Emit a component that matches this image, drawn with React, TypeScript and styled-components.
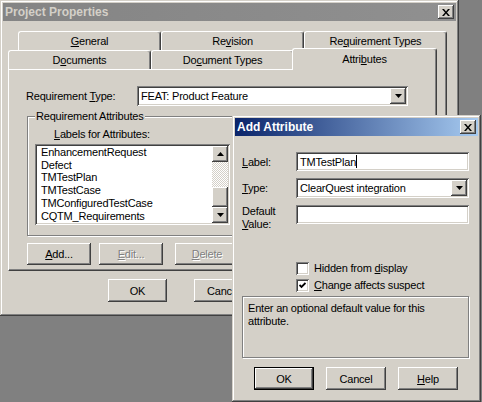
import styled, { createGlobalStyle } from "styled-components";

const GlobalStyle = createGlobalStyle`
  html, body {
    margin: 0;
    padding: 0;
  }
  body {
    background: #808080;
    font-family: "Liberation Sans", Arial, sans-serif;
    font-size: 11px;
    letter-spacing: -0.2px;
    color: #000;
  }
`;

const raised = `
  box-shadow: inset -1px -1px #404040, inset 1px 1px #ffffff,
    inset -2px -2px #808080, inset 2px 2px #d4d0c8;
`;

const sunken = `
  box-shadow: inset 1px 1px #808080, inset -1px -1px #ffffff,
    inset 2px 2px #404040, inset -2px -2px #d4d0c8;
`;

const Desktop = styled.div`
  position: relative;
  width: 482px;
  height: 402px;
  overflow: hidden;
  background: #808080;
`;

const Window = styled.div<{ $x: number; $y: number; $w: number; $h: number }>`
  position: absolute;
  left: ${(p) => p.$x}px;
  top: ${(p) => p.$y}px;
  width: ${(p) => p.$w}px;
  height: ${(p) => p.$h}px;
  box-sizing: border-box;
  padding: 3px;
  display: flex;
  flex-direction: column;
  background: #d4d0c8;
  box-shadow: inset -1px -1px #404040, inset 1px 1px #d4d0c8,
    inset -2px -2px #808080, inset 2px 2px #ffffff;
`;

const TitleBar = styled.div<{ $active?: boolean }>`
  flex: none;
  height: 18px;
  display: flex;
  align-items: center;
  justify-content: space-between;
  padding: 0 2px;
  background: ${(p) =>
    p.$active
      ? "linear-gradient(to right, #0a246a, #a6caf0)"
      : "linear-gradient(to right, #848484, #909090)"};
  color: ${(p) => (p.$active ? "#ffffff" : "#d4d0c8")};
  font-size: 12px;
  font-weight: bold;
  letter-spacing: 0;
`;

const CloseButton = styled.div`
  width: 16px;
  height: 14px;
  box-sizing: border-box;
  display: flex;
  align-items: center;
  justify-content: center;
  background: #d4d0c8;
  ${raised}
`;

const ProjectBody = styled.div`
  display: flex;
  flex-direction: column;
  padding: 10px 0 0 5px;
`;

const TabControl = styled.div`
  display: flex;
  flex-direction: column;
  width: 439px;
`;

const BackRow = styled.div`
  display: flex;
  height: 19px;
  padding-left: 10px;
`;

const FrontArea = styled.div`
  display: flex;
`;

const FrontColumn = styled.div`
  display: flex;
  flex-direction: column;
  width: 429px;
`;

const FrontRow = styled.div`
  display: flex;
  align-items: flex-end;
  height: 19px;
`;

const RowEdge = styled.div`
  width: 10px;
  box-sizing: border-box;
  border-right: 1px solid #404040;
  box-shadow: inset -1px 0 #808080;
`;

const Tab = styled.div<{ $selected?: boolean }>`
  position: relative;
  z-index: ${(p) => (p.$selected ? 1 : 0)};
  box-sizing: border-box;
  width: ${(p) => (p.$selected ? 145 : 143)}px;
  height: ${(p) => (p.$selected ? 22 : 19)}px;
  margin: ${(p) => (p.$selected ? "-2px 0 -1px -2px" : "0")};
  padding-bottom: ${(p) => (p.$selected ? 2 : 0)}px;
  display: flex;
  align-items: center;
  justify-content: center;
  background: #d4d0c8;
  border-top: 1px solid #ffffff;
  border-left: 1px solid #ffffff;
  border-right: 1px solid #404040;
  border-radius: 3px 3px 0 0;
  box-shadow: inset -1px 0 #808080;
`;

const Panel = styled.div`
  box-sizing: border-box;
  height: 202px;
  display: flex;
  flex-direction: column;
  padding: 16px 0 0 17px;
  border: 1px solid;
  border-color: #ffffff #404040 #404040 #ffffff;
  box-shadow: inset -1px -1px #808080;
`;

const TypeRow = styled.div`
  display: flex;
  align-items: center;
  height: 20px;
`;

const FieldLabel = styled.span<{ $w: number }>`
  width: ${(p) => p.$w}px;
  flex: none;
  white-space: nowrap;
`;

const Combo = styled.div<{ $w: number }>`
  box-sizing: border-box;
  width: ${(p) => p.$w}px;
  height: 20px;
  padding: 2px;
  display: flex;
  align-items: center;
  background: #ffffff;
  ${sunken}
`;

const ComboValue = styled.span`
  flex: 1;
  padding-left: 2px;
  white-space: nowrap;
  overflow: hidden;
`;

const ArrowButton = styled.div<{ $h?: number }>`
  flex: none;
  width: 16px;
  height: ${(p) => p.$h ?? 16}px;
  box-sizing: border-box;
  display: flex;
  align-items: center;
  justify-content: center;
  background: #d4d0c8;
  ${raised}
`;

const GroupBox = styled.fieldset`
  box-sizing: border-box;
  width: 391px;
  min-width: 0;
  margin: 4px 0 0 1px;
  padding: 0 0 10px 7px;
  border: 1px solid #808080;
  box-shadow: inset 1px 1px #ffffff, 1px 1px #ffffff;
`;

const GroupTitle = styled.legend`
  padding: 0 1px;
  line-height: 13px;
  background: #d4d0c8;
`;

const ListCaption = styled.div`
  margin: 5px 0 0 19px;
  line-height: 13px;
`;

const ListBox = styled.div`
  box-sizing: border-box;
  width: 195px;
  height: 81px;
  margin-top: 3px;
  padding: 2px;
  display: flex;
  background: #ffffff;
  ${sunken}
`;

const ListItems = styled.div`
  flex: 1;
  padding-left: 4px;
  line-height: 12.7px;
  overflow: hidden;
  white-space: nowrap;
`;

const ScrollBar = styled.div`
  width: 16px;
  display: flex;
  flex-direction: column;
`;

const ScrollTrack = styled.div<{ $h: number }>`
  height: ${(p) => p.$h}px;
  background: repeating-conic-gradient(#ffffff 0% 25%, #d4d0c8 0% 50%) 0 0 / 2px 2px;
`;

const ScrollThumb = styled.div<{ $h: number }>`
  height: ${(p) => p.$h}px;
  box-sizing: border-box;
  background: #d4d0c8;
  ${raised}
`;

const ButtonRow = styled.div<{ $gap: number }>`
  display: flex;
  gap: ${(p) => p.$gap}px;
`;

const ActionRow = styled(ButtonRow)`
  margin: 7px 0 0 1px;
`;

const FooterRow = styled(ButtonRow)`
  margin: 8px 0 0 100px;
`;

const Button = styled.button<{ $w: number; $h: number; $lead?: number; $default?: boolean }>`
  box-sizing: border-box;
  width: ${(p) => p.$w}px;
  height: ${(p) => p.$h}px;
  margin: 0 0 0 ${(p) => p.$lead ?? 0}px;
  padding: 0;
  font: inherit;
  letter-spacing: inherit;
  color: #000;
  background: #d4d0c8;
  border: ${(p) => (p.$default ? "1px solid #000" : "none")};
  ${raised}

  &:disabled {
    color: #808080;
    text-shadow: 1px 1px #ffffff;
  }
`;

const DialogBody = styled.div`
  display: flex;
  flex-direction: column;
  padding: 16px 0 0 7px;
`;

const FormGrid = styled.div`
  display: grid;
  grid-template-columns: 54px 173px;
  row-gap: 7px;
  align-items: center;
`;

const TopLabel = styled.span`
  align-self: start;
  line-height: 13px;
`;

const TextField = styled.div<{ $top?: boolean }>`
  box-sizing: border-box;
  height: 19px;
  padding: 2px 4px;
  display: flex;
  align-items: center;
  align-self: ${(p) => (p.$top ? "start" : "center")};
  background: #ffffff;
  white-space: nowrap;
  ${sunken}
`;

const Caret = styled.span`
  width: 1px;
  height: 13px;
  background: #000;
`;

const CheckList = styled.div`
  display: flex;
  flex-direction: column;
  gap: 4px;
  margin: 31px 0 0 54px;
`;

const CheckRow = styled.label`
  display: flex;
  align-items: center;
  gap: 5px;
  height: 13px;
  line-height: 13px;
`;

const CheckBox = styled.span`
  width: 13px;
  height: 13px;
  box-sizing: border-box;
  display: flex;
  align-items: center;
  justify-content: center;
  background: #ffffff;
  ${sunken}
`;

const HelpBox = styled.div`
  box-sizing: border-box;
  width: 227px;
  height: 62px;
  margin-top: 4px;
  padding: 5px 5px;
  line-height: 13px;
  border: 1px solid #808080;
  box-shadow: inset 1px 1px #ffffff, 1px 1px #ffffff;
`;

const DialogButtons = styled(ButtonRow)`
  margin: 9px 0 0 12px;
`;

const CloseGlyph = () => (
  <svg width="8" height="7" viewBox="0 0 8 7">
    <path d="M0 0h2l2 2.4L6 0h2L5 3.5 8 7H6L4 4.6 2 7H0l3-3.5z" fill="#000" />
  </svg>
);

const Arrow = ({ up }: { up?: boolean }) => (
  <svg width="7" height="4" viewBox="0 0 7 4">
    <path d={up ? "M3.5 0L7 4H0z" : "M0 0h7L3.5 4z"} fill="#000" />
  </svg>
);

const Tick = () => (
  <svg width="7" height="7" viewBox="0 0 7 7">
    <path d="M0.5 3l2 2 4-4" fill="none" stroke="#000" strokeWidth="1.8" />
  </svg>
);

const attributes = [
  "EnhancementRequest",
  "Defect",
  "TMTestPlan",
  "TMTestCase",
  "TMConfiguredTestCase",
  "CQTM_Requirements",
];

export default function App() {
  return (
    <Desktop>
      <GlobalStyle />

      <Window $x={0} $y={0} $w={459} $h={316}>
        <TitleBar>
          <span>Project Properties</span>
          <CloseButton>
            <CloseGlyph />
          </CloseButton>
        </TitleBar>
        <ProjectBody>
          <TabControl>
            <BackRow>
              <Tab>
                <span>
                  <u>G</u>eneral
                </span>
              </Tab>
              <Tab>
                <span>
                  Re<u>v</u>ision
                </span>
              </Tab>
              <Tab>
                <span>
                  Re<u>q</u>uirement Types
                </span>
              </Tab>
            </BackRow>
            <FrontArea>
              <FrontColumn>
                <FrontRow>
                  <Tab>
                    <span>
                      D<u>o</u>cuments
                    </span>
                  </Tab>
                  <Tab>
                    <span>
                      Do<u>c</u>ument Types
                    </span>
                  </Tab>
                  <Tab $selected>
                    <span>
                      Attri<u>b</u>utes
                    </span>
                  </Tab>
                </FrontRow>
                <Panel>
                  <TypeRow>
                    <FieldLabel $w={111}>
                      Requirement <u>T</u>ype:
                    </FieldLabel>
                    <Combo $w={271}>
                      <ComboValue>FEAT: Product Feature</ComboValue>
                      <ArrowButton>
                        <Arrow />
                      </ArrowButton>
                    </Combo>
                  </TypeRow>
                  <GroupBox>
                    <GroupTitle>Requirement Attributes</GroupTitle>
                    <ListCaption>
                      <u>L</u>abels for Attributes:
                    </ListCaption>
                    <ListBox>
                      <ListItems>
                        {attributes.map((name) => (
                          <div key={name}>{name}</div>
                        ))}
                      </ListItems>
                      <ScrollBar>
                        <ArrowButton>
                          <Arrow up />
                        </ArrowButton>
                        <ScrollTrack $h={25} />
                        <ScrollThumb $h={20} />
                        <ArrowButton>
                          <Arrow />
                        </ArrowButton>
                      </ScrollBar>
                    </ListBox>
                  </GroupBox>
                  <ActionRow $gap={8}>
                    <Button $w={64} $h={22}>
                      <u>A</u>dd...
                    </Button>
                    <Button $w={64} $h={22} disabled>
                      <u>E</u>dit...
                    </Button>
                    <Button $w={64} $h={22} $lead={4} disabled>
                      <u>D</u>elete
                    </Button>
                  </ActionRow>
                </Panel>
              </FrontColumn>
              <RowEdge />
            </FrontArea>
          </TabControl>
          <FooterRow $gap={27}>
            <Button $w={59} $h={23}>OK</Button>
            <Button $w={59} $h={23}>Cancel</Button>
          </FooterRow>
        </ProjectBody>
      </Window>

      <Window $x={232} $y={115} $w={249} $h={287}>
        <TitleBar $active>
          <span>Add Attribute</span>
          <CloseButton>
            <CloseGlyph />
          </CloseButton>
        </TitleBar>
        <DialogBody>
          <FormGrid>
            <span>
              <u>L</u>abel:
            </span>
            <TextField>
              TMTestPlan
              <Caret />
            </TextField>
            <span>
              <u>T</u>ype:
            </span>
            <Combo $w={173}>
              <ComboValue>ClearQuest integration</ComboValue>
              <ArrowButton>
                <Arrow />
              </ArrowButton>
            </Combo>
            <TopLabel>
              Default
              <br />
              <u>V</u>alue:
            </TopLabel>
            <TextField $top />
          </FormGrid>
          <CheckList>
            <CheckRow>
              <CheckBox />
              <span>
                Hidden from <u>d</u>isplay
              </span>
            </CheckRow>
            <CheckRow>
              <CheckBox>
                <Tick />
              </CheckBox>
              <span>
                <u>C</u>hange affects suspect
              </span>
            </CheckRow>
          </CheckList>
          <HelpBox>
            Enter an optional default value for this
            <br />
            attribute.
          </HelpBox>
          <DialogButtons $gap={12}>
            <Button $w={60} $h={23} $default>
              OK
            </Button>
            <Button $w={60} $h={23}>Cancel</Button>
            <Button $w={60} $h={23}>
              <u>H</u>elp
            </Button>
          </DialogButtons>
        </DialogBody>
      </Window>
    </Desktop>
  );
}
